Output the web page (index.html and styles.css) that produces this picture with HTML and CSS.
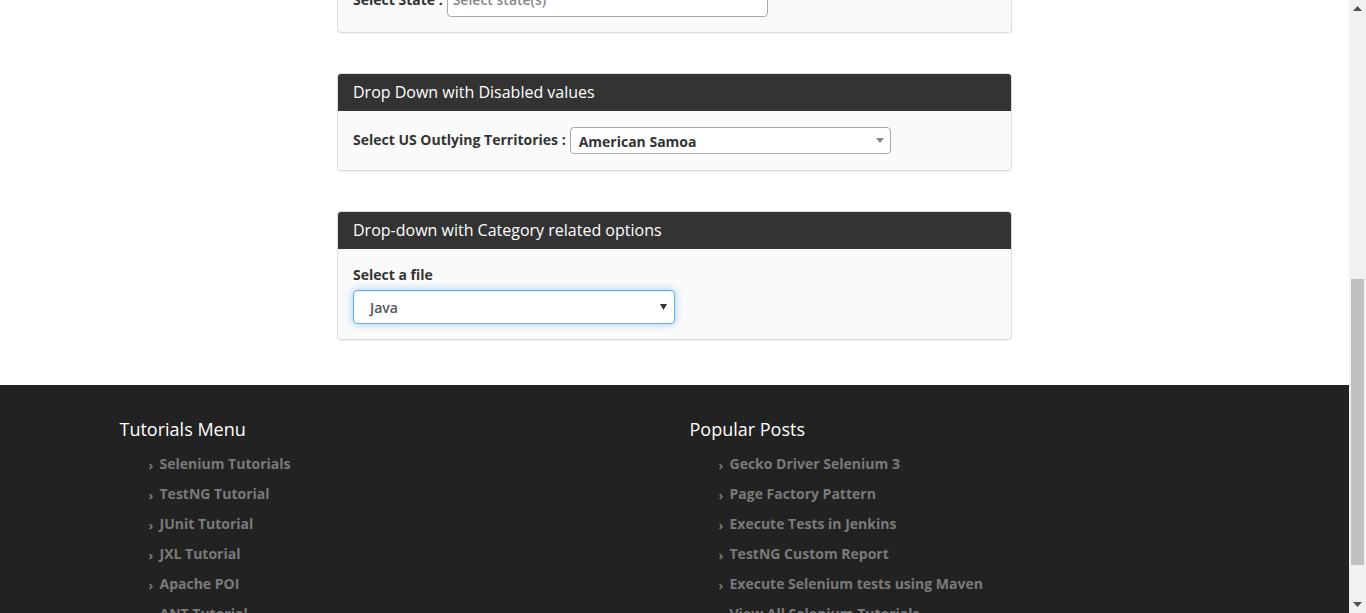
FILE: index.html
```html
<!DOCTYPE html>
<html lang="en">
<head>
<meta charset="utf-8">
<title>Select Dropdown Demo</title>
<link rel="stylesheet" href="styles.css">
</head>
<body>
<div class="page">
  <main class="main">
    <section class="panel">
      <div class="panel-heading"><h3 class="panel-title">Multi Select List Demo</h3></div>
      <div class="panel-body">
        <div class="inline-row">
          <label class="lbl">Select State :</label>
          <div class="multi-input">Select state(s)</div>
        </div>
      </div>
    </section>

    <section class="panel">
      <div class="panel-heading"><h3 class="panel-title">Drop Down with Disabled values</h3></div>
      <div class="panel-body">
        <div class="inline-row">
          <label class="lbl up">Select US Outlying Territories :</label>
          <div class="select2">
            <span class="select2-text">American Samoa</span>
            <svg class="caret" width="8" height="5" viewBox="0 0 8 5"><path d="M0 0h8L4 5z" fill="#888"/></svg>
          </div>
        </div>
      </div>
    </section>

    <section class="panel">
      <div class="panel-heading"><h3 class="panel-title">Drop-down with Category related options</h3></div>
      <div class="panel-body tall">
        <label class="lbl block">Select a file</label>
        <div class="form-select">
          <span class="form-select-text">Java</span>
          <svg class="caret" width="7" height="6" viewBox="0 0 7 6"><path d="M0 0h7L3.5 6z" fill="#333"/></svg>
        </div>
      </div>
    </section>
  </main>

  <footer class="footer">
    <div class="footer-inner">
      <div class="footer-col">
        <h3 class="footer-title">Tutorials Menu</h3>
        <ul class="footer-list">
          <li><span class="chev">›</span><a href="#">Selenium Tutorials</a></li>
          <li><span class="chev">›</span><a href="#">TestNG Tutorial</a></li>
          <li><span class="chev">›</span><a href="#">JUnit Tutorial</a></li>
          <li><span class="chev">›</span><a href="#">JXL Tutorial</a></li>
          <li><span class="chev">›</span><a href="#">Apache POI</a></li>
          <li><span class="chev">›</span><a href="#">ANT Tutorial</a></li>
        </ul>
      </div>
      <div class="footer-col">
        <h3 class="footer-title">Popular Posts</h3>
        <ul class="footer-list">
          <li><span class="chev">›</span><a href="#">Gecko Driver Selenium 3</a></li>
          <li><span class="chev">›</span><a href="#">Page Factory Pattern</a></li>
          <li><span class="chev">›</span><a href="#">Execute Tests in Jenkins</a></li>
          <li><span class="chev">›</span><a href="#">TestNG Custom Report</a></li>
          <li><span class="chev">›</span><a href="#">Execute Selenium tests using Maven</a></li>
          <li><span class="chev">›</span><a href="#">View All Selenium Tutorials</a></li>
        </ul>
      </div>
    </div>
  </footer>
</div>

<div class="scrollbar">
  <div class="sb-btn"><svg width="9" height="5" viewBox="0 0 9 5"><path d="M0 5L4.5 0 9 5z" fill="#505050"/></svg></div>
  <div class="sb-track"><div class="sb-thumb"></div></div>
  <div class="sb-btn"><svg width="9" height="5" viewBox="0 0 9 5"><path d="M0 0h9L4.5 5z" fill="#505050"/></svg></div>
</div>
</body>
</html>
```

FILE: styles.css
```css
* { box-sizing: border-box; }
html, body {
  margin: 0;
  padding: 0;
  height: 613px;
  overflow: hidden;
}
body {
  font-family: "Open Sans", "Liberation Sans", sans-serif;
  font-size: 14px;
  line-height: 20px;
  color: #333;
  background: #fff;
}
.page {
  width: 1349px;
}
.main {
  width: 675px;
  margin: -70px auto 0;
  padding-bottom: 45px;
}
.panel {
  border: 1px solid #ddd;
  border-radius: 4px;
  background: #fafafa;
  margin-bottom: 40px;
  box-shadow: 0 1px 1px rgba(0,0,0,0.05);
}
.panel:last-child { margin-bottom: 0; }
.panel-heading {
  background: #333;
  color: #fff;
  padding: 10px 15px;
  border-radius: 3px 3px 0 0;
}
.panel-title {
  margin: 0;
  font-size: 16px;
  font-weight: 400;
  line-height: 17px;
}
.panel-body {
  padding: 15px;
}
.panel-body.tall {
  padding-top: 16px;
}
.inline-row {
  display: flex;
  align-items: center;
  gap: 4px;
}
.lbl {
  font-weight: 700;
  color: #333;
}
.lbl.up {
  padding-bottom: 2px;
}
.lbl.block {
  display: block;
  margin-bottom: 5px;
}
.multi-input {
  width: 321px;
  height: 34px;
  border: 1px solid #aaa;
  border-radius: 4px;
  background: #fff;
  color: #888;
  font-weight: 600;
  padding: 6px 5px;
  line-height: 20px;
}
.select2 {
  width: 321px;
  height: 27px;
  margin: 1px 0;
  border: 1px solid #aaa;
  border-radius: 4px;
  background: #fff;
  display: flex;
  align-items: center;
  justify-content: space-between;
  padding: 0 6px 0 8px;
}
.select2-text {
  font-weight: 700;
  color: #333;
  padding-top: 2px;
}
.form-select {
  width: 322px;
  height: 34px;
  border: 1px solid #66afe9;
  border-radius: 4px;
  background: #fff;
  box-shadow: inset 0 1px 1px rgba(0,0,0,0.075), 0 0 8px rgba(102,175,233,0.6);
  display: flex;
  align-items: center;
  justify-content: space-between;
  padding: 0 7px 0 16px;
}
.form-select-text {
  font-weight: 600;
  color: #555;
  padding-top: 2px;
}
.footer {
  background: #222;
  padding: 30px 0 0;
  height: 240px;
}
.footer-inner {
  width: 1140px;
  margin: 0 auto;
  display: grid;
  grid-template-columns: 1fr 1fr;
}
.footer-col {
  padding: 0 15px;
}
.footer-title {
  margin: 0 0 6px;
  font-size: 18px;
  font-weight: 400;
  line-height: 28px;
  color: #fff;
}
.footer-list {
  list-style: none;
  margin: 0;
  padding: 0 0 0 29px;
}
.footer-list li {
  display: flex;
  align-items: center;
  height: 30px;
}
.chev {
  color: #7a7a7a;
  font-weight: 700;
  font-size: 13px;
  width: 11px;
  padding-top: 1px;
}
.footer-list a {
  color: #7a7a7a;
  font-weight: 700;
  text-decoration: none;
}
.scrollbar {
  position: fixed;
  top: 0;
  right: 0;
  width: 17px;
  height: 613px;
  background: #f1f1f1;
  display: flex;
  flex-direction: column;
}
.sb-btn {
  height: 17px;
  display: flex;
  align-items: center;
  justify-content: center;
}
.sb-track {
  flex: 1;
  padding: 262px 2px 31px;
}
.sb-thumb {
  height: 100%;
  background: #c1c1c1;
}
```
